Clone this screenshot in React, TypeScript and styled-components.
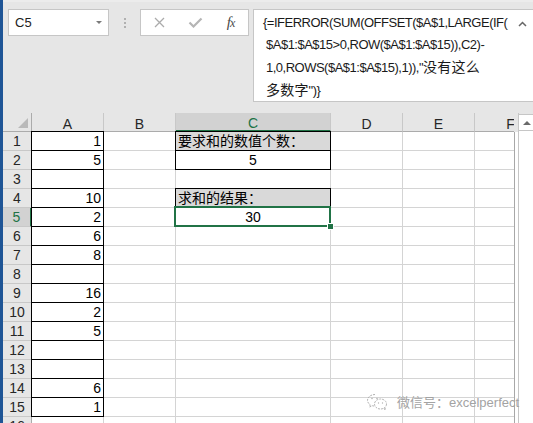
import React from "react";
import styled, { createGlobalStyle, css } from "styled-components";

const Global = createGlobalStyle`
  html, body { margin: 0; padding: 0; }
  body { font-family: "Liberation Sans", "Noto Sans CJK SC", sans-serif; background: #fff; }
`;

const Window = styled.div`
  position: relative;
  width: 533px;
  height: 423px;
  overflow: hidden;
  box-sizing: border-box;
  border-left: 3px solid #1f5596;
  background: #e6e6e6;
  display: flex;
  flex-direction: column;
`;

const Toolbar = styled.div`
  flex: none;
  height: 113px;
  box-sizing: border-box;
  padding: 7px 0 0 5px;
  display: flex;
  align-items: flex-start;
  overflow: hidden;
  border-top: 2px solid #ececec;
`;

const NameBox = styled.div`
  flex: none;
  width: 101px;
  height: 27px;
  box-sizing: border-box;
  background: #fff;
  border: 1px solid #c6c6c6;
  display: flex;
  align-items: center;
  justify-content: space-between;
  padding: 0 6px;
  font-size: 13px;
  color: #222;
`;

const DropTriangle = styled.span`
  width: 0;
  height: 0;
  border-left: 3px solid transparent;
  border-right: 3px solid transparent;
  border-top: 3px solid #7a7a7a;
`;

const Grip = styled.div`
  flex: none;
  width: 31px;
  height: 27px;
  display: flex;
  flex-direction: column;
  align-items: center;
  justify-content: center;
  gap: 2px;
`;

const GripDot = styled.span`
  width: 2px;
  height: 2px;
  background: #b0b0b0;
`;

const ButtonBox = styled.div`
  flex: none;
  width: 109px;
  height: 27px;
  box-sizing: border-box;
  background: #fff;
  border: 1px solid #c6c6c6;
  display: grid;
  grid-template-columns: 36px 36px 35px;
  align-items: center;
  justify-items: center;
`;

const Fx = styled.span`
  font-family: "Liberation Serif", serif;
  font-style: italic;
  color: #4a4a4a;
  font-size: 15px;
  letter-spacing: -1px;
  & > small { font-size: 12px; }
`;

const FormulaBox = styled.div`
  flex: none;
  margin-left: 4px;
  width: 284px;
  height: 93px;
  box-sizing: border-box;
  background: #fff;
  border: 1px solid #c6c6c6;
  display: flex;
`;

const FormulaText = styled.div`
  flex: none;
  width: 258px;
  box-sizing: border-box;
  padding: 2px 0 0 12px;
  font-size: 13px;
  letter-spacing: -0.5px;
  line-height: 22px;
  color: #1a1a1a;
  white-space: nowrap;
`;

const FormulaLine = styled.div<{ $indent?: number }>`
  text-indent: ${(p) => p.$indent ?? 0}px;
`;

const Cjk = styled.span`
  font-size: 14px;
  letter-spacing: 0.2px;
`;

const Collapse = styled.div`
  flex: none;
  width: 20px;
  display: flex;
  justify-content: center;
  padding-top: 11px;
`;

const Sheet = styled.div`
  flex: 1;
  min-height: 0;
  display: flex;
`;

const Grid = styled.div`
  flex: none;
  width: 511px;
  display: grid;
  grid-template-columns: 29px 72px 72px 155px 72px 72px 72px;
  grid-auto-rows: 19px;
  align-content: start;
  overflow: hidden;
  background: #fff;
`;

const Corner = styled.div`
  box-sizing: border-box;
  background: #e6e6e6;
  border-right: 1px solid #ababab;
  border-bottom: 1px solid #ababab;
  display: flex;
  align-items: flex-end;
  justify-content: flex-end;
  padding: 0 3px 3px 0;
`;

const CornerTriangle = styled.span`
  width: 0;
  height: 0;
  border-left: 10px solid transparent;
  border-bottom: 10px solid #b9b9b9;
`;

const ColHead = styled.div<{ $selected?: boolean }>`
  box-sizing: border-box;
  background: ${(p) => (p.$selected ? "#d2d2d2" : "#e6e6e6")};
  border-right: 1px solid #c8c8c8;
  border-bottom: ${(p) => (p.$selected ? "2px solid #217346" : "1px solid #ababab")};
  color: ${(p) => (p.$selected ? "#217346" : "#262626")};
  font-size: 14px;
  display: flex;
  align-items: center;
  justify-content: center;
  padding-top: 3px;
  white-space: nowrap;
  overflow: hidden;
`;

const RowHead = styled.div<{ $selected?: boolean }>`
  box-sizing: border-box;
  background: ${(p) => (p.$selected ? "#d2d2d2" : "#e6e6e6")};
  border-right: ${(p) => (p.$selected ? "2px solid #217346" : "1px solid #ababab")};
  border-bottom: 1px solid #c8c8c8;
  color: ${(p) => (p.$selected ? "#217346" : "#262626")};
  font-size: 14px;
  line-height: 14px;
  display: flex;
  align-items: flex-end;
  justify-content: center;
  padding-bottom: 2px;
`;

type Align = "left" | "center" | "right";

const Cell = styled.div<{ $align?: Align; $boxed?: boolean; $fill?: string; $selected?: boolean }>`
  position: relative;
  box-sizing: border-box;
  border-right: 1px solid #d4d4d4;
  border-bottom: 1px solid #d4d4d4;
  background: ${(p) => p.$fill ?? "#fff"};
  display: flex;
  align-items: flex-end;
  justify-content: ${(p) =>
    p.$align === "center" ? "center" : p.$align === "left" ? "flex-start" : "flex-end"};
  padding: 0 2px 2px 2px;
  font-size: 14px;
  line-height: 14px;
  color: #000;
  white-space: nowrap;
  ${(p) =>
    p.$boxed &&
    css`
      &::after {
        content: "";
        position: absolute;
        top: -1px;
        left: -1px;
        right: -1px;
        bottom: -1px;
        border: 1px solid #000;
        pointer-events: none;
      }
    `}
  ${(p) =>
    p.$selected &&
    css`
      z-index: 2;
      &::after {
        content: "";
        position: absolute;
        top: -2px;
        left: -2px;
        right: -1px;
        bottom: -1px;
        border: 2px solid #217346;
        pointer-events: none;
      }
    `}
`;

const FillHandle = styled.span`
  position: absolute;
  right: -4px;
  bottom: -4px;
  width: 5px;
  height: 5px;
  background: #217346;
  border: 1px solid #fff;
  z-index: 3;
`;

const ScrollGutter = styled.div`
  flex: none;
  width: 3px;
  background: #fff;
  border-left: 1px solid #a8a8a8;
  margin-top: 19px;
`;

const ScrollBar = styled.div`
  flex: none;
  width: 18px;
  display: flex;
  flex-direction: column;
  background: #fff;
  border-left: 1px solid #c6c6c6;
`;

const ScrollHeadGap = styled.div`
  flex: none;
  height: 1px;
  background: #e6e6e6;
`;

const ScrollUp = styled.div`
  flex: none;
  height: 17px;
  box-sizing: border-box;
  border: 1px solid #c6c6c6;
  border-left: none;
  display: flex;
  align-items: center;
  justify-content: center;
  padding-right: 2px;
`;

const UpTriangle = styled.span`
  width: 0;
  height: 0;
  border-left: 4px solid transparent;
  border-right: 4px solid transparent;
  border-bottom: 4px solid #6a6a6a;
`;

const Watermark = styled.div`
  position: absolute;
  left: 363px;
  top: 392px;
  display: flex;
  align-items: center;
  gap: 9px;
  font-size: 13px;
  color: #a3a3a3;
  white-space: nowrap;
`;

const aValues = ["1", "5", "", "10", "2", "6", "8", "", "16", "2", "5", "", "", "6", "1", ""];

type CSpec = { text: string; align: Align; fill?: string; boxed?: boolean; selected?: boolean };
const cSpecs: Record<number, CSpec> = {
  1: { text: "要求和的数值个数：", align: "left", fill: "#d9d9d9", boxed: true },
  2: { text: "5", align: "center", boxed: true },
  4: { text: "求和的结果：", align: "left", fill: "#d9d9d9", boxed: true },
  5: { text: "30", align: "center", selected: true },
};

const columns = ["A", "B", "C", "D", "E", "F"];

const WeChatIcon = () => (
  <svg width="22" height="18" viewBox="0 0 22 18" fill="none" stroke="#b3b3b3" strokeWidth="1" strokeDasharray="2 1">
    <path d="M9 1.5C4.9 1.5 1.5 4.1 1.5 7.3c0 1.8 1 3.4 2.7 4.5l-.6 2.2 2.6-1.3c.9.3 1.8.4 2.8.4" />
    <ellipse cx="14.5" cy="11" rx="6" ry="5" fill="#fff" />
    <path d="M18 15.3l1.2 1.9-.1-2.5" />
    <circle cx="6" cy="5.5" r="0.8" fill="#b3b3b3" stroke="none" />
    <circle cx="11" cy="5.5" r="0.8" fill="#b3b3b3" stroke="none" />
    <circle cx="12.5" cy="10" r="0.7" fill="#b3b3b3" stroke="none" />
    <circle cx="16.5" cy="10" r="0.7" fill="#b3b3b3" stroke="none" />
  </svg>
);

export default function App() {
  return (
    <>
      <Global />
      <Window>
        <Toolbar>
          <NameBox>
            <span>C5</span>
            <DropTriangle />
          </NameBox>
          <Grip>
            <GripDot />
            <GripDot />
            <GripDot />
          </Grip>
          <ButtonBox>
            <svg width="11" height="11" viewBox="0 0 11 11">
              <path d="M1 1L10 10M10 1L1 10" stroke="#ababab" strokeWidth="1.3" />
            </svg>
            <svg width="15" height="11" viewBox="0 0 15 11">
              <path d="M1.5 5.5L5.5 9.5L13.5 1.5" stroke="#b5b5b5" strokeWidth="2.2" fill="none" />
            </svg>
            <Fx>
              f<small>x</small>
            </Fx>
          </ButtonBox>
          <FormulaBox>
            <FormulaText>
              <FormulaLine $indent={-3}>{"{=IFERROR(SUM(OFFSET($A$1,LARGE(IF("}</FormulaLine>
              <FormulaLine>{"$A$1:$A$15>0,ROW($A$1:$A$15)),C2)-"}</FormulaLine>
              <FormulaLine>
                {'1,0,ROWS($A$1:$A$15),1)),"'}
                <Cjk>没有这么</Cjk>
              </FormulaLine>
              <FormulaLine>
                <Cjk>多数字</Cjk>
                {'")}'}
              </FormulaLine>
            </FormulaText>
            <Collapse>
              <svg width="9" height="6" viewBox="0 0 9 6">
                <path d="M1 5L4.5 1.5L8 5" stroke="#666" strokeWidth="1.5" fill="none" />
              </svg>
            </Collapse>
          </FormulaBox>
        </Toolbar>
        <Sheet>
          <Grid>
            <Corner>
              <CornerTriangle />
            </Corner>
            {columns.map((c) => (
              <ColHead key={c} $selected={c === "C"}>
                {c}
              </ColHead>
            ))}
            {aValues.map((a, idx) => {
              const row = idx + 1;
              const spec = cSpecs[row];
              return (
                <React.Fragment key={row}>
                  <RowHead $selected={row === 5}>{row}</RowHead>
                  <Cell $boxed={row <= 15}>{a}</Cell>
                  <Cell />
                  {spec ? (
                    <Cell $align={spec.align} $fill={spec.fill} $boxed={spec.boxed} $selected={spec.selected}>
                      {spec.text}
                      {spec.selected && <FillHandle />}
                    </Cell>
                  ) : (
                    <Cell />
                  )}
                  <Cell />
                  <Cell />
                  <Cell />
                </React.Fragment>
              );
            })}
          </Grid>
          <ScrollGutter />
          <ScrollBar>
            <ScrollHeadGap />
            <ScrollUp>
              <UpTriangle />
            </ScrollUp>
          </ScrollBar>
        </Sheet>
        <Watermark>
          <WeChatIcon />
          <span>微信号：excelperfect</span>
        </Watermark>
      </Window>
    </>
  );
}
